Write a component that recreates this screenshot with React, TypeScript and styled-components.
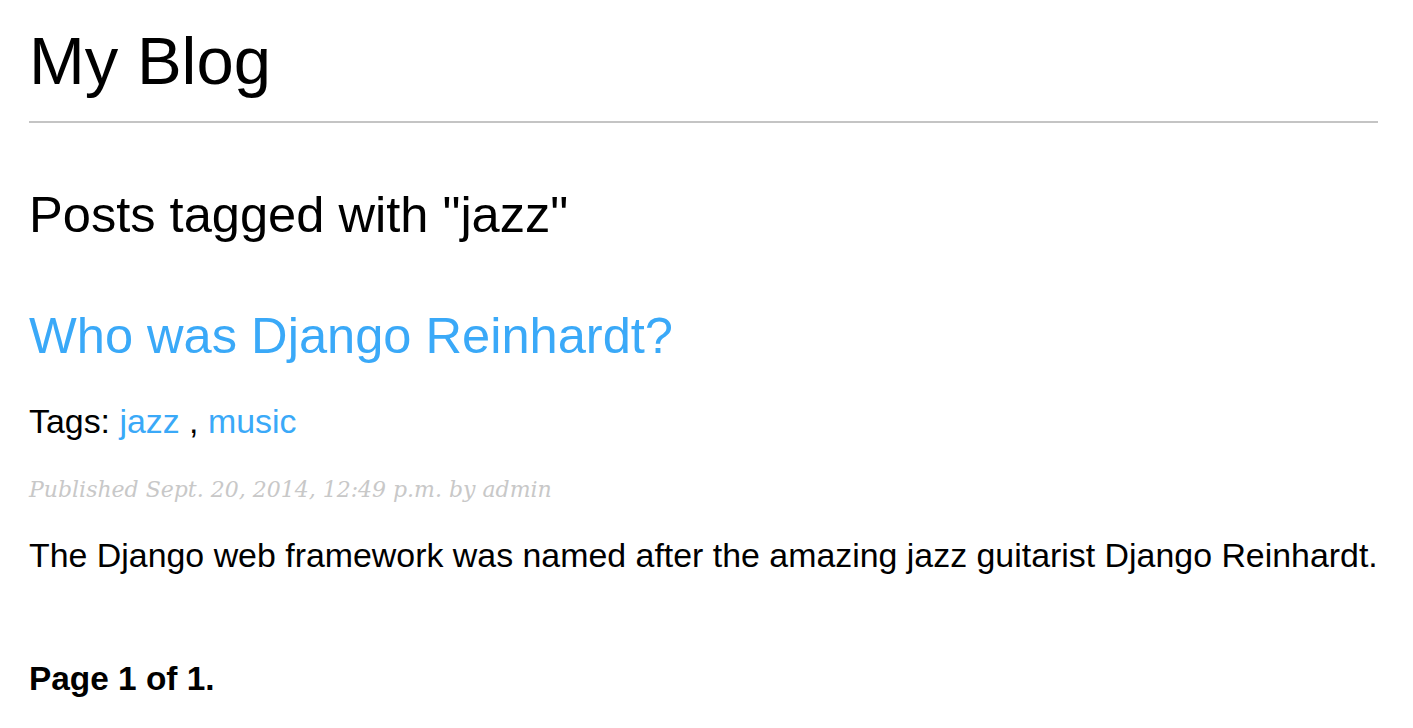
import React from "react";
import styled, { createGlobalStyle } from "styled-components";

const GlobalStyle = createGlobalStyle`
  html, body { margin: 0; padding: 0; background: #fff; }
  body { font-family: "Liberation Sans", Arial, Helvetica, sans-serif; color: #000; }
`;

const Content = styled.main`
  display: flex;
  flex-direction: column;
  padding: 0 35px 0 29px;
`;

const SiteTitle = styled.h1`
  margin: 0;
  padding: 23px 0 0;
  height: 123px;
  box-sizing: border-box;
  font-size: 67px;
  line-height: 76px;
  font-weight: normal;
  border-bottom: 2px solid #c4c4c4;
`;

const Heading = styled.h2<{ $top: number }>`
  margin: ${(p) => p.$top}px 0 0;
  font-size: 50.6px;
  line-height: 60px;
  font-weight: normal;
`;

const Link = styled.a`
  color: #3aa9f8;
  text-decoration: none;
`;

const Para = styled.p<{ $top: number }>`
  margin: ${(p) => p.$top}px 0 0;
  font-size: 33.9px;
  line-height: 40px;
`;

const DateLine = styled.p`
  margin: 34px 0 0;
  font-family: "DejaVu Serif", Georgia, serif;
  font-style: italic;
  font-size: 22px;
  line-height: 30px;
  color: #c8c8c8;
`;

const Pagination = styled.div`
  margin: 84px 0 0;
  font-size: 33.4px;
  line-height: 40px;
  font-weight: bold;
`;

export default function App() {
  return (
    <>
      <GlobalStyle />
      <Content>
        <SiteTitle>My Blog</SiteTitle>
        <Heading $top={62}>Posts tagged with "jazz"</Heading>
        <Heading $top={61}>
          <Link href="#">Who was Django Reinhardt?</Link>
        </Heading>
        <Para $top={35}>
          Tags: <Link href="#">jazz</Link> , <Link href="#">music</Link>
        </Para>
        <DateLine>Published Sept. 20, 2014, 12:49 p.m. by admin</DateLine>
        <Para $top={30}>
          The Django web framework was named after the amazing jazz guitarist Django Reinhardt.
        </Para>
        <Pagination>Page 1 of 1.</Pagination>
      </Content>
    </>
  );
}
